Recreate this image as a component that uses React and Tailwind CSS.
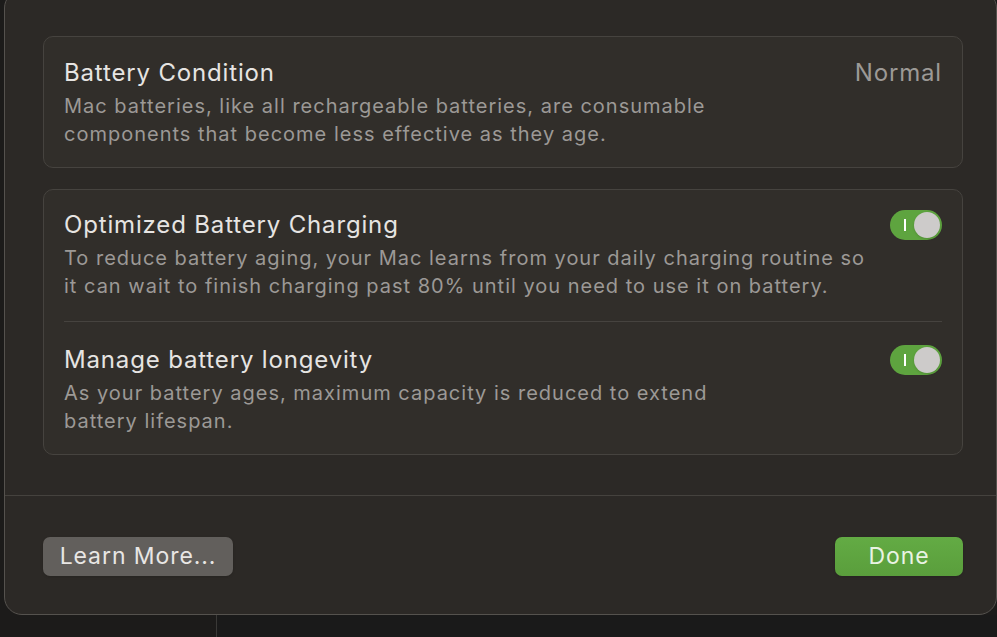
import React from "react";

function Toggle() {
  return (
    <div className="relative h-[30px] w-[52px] shrink-0 rounded-full bg-[#5ea43f]">
      <span className="absolute left-[14px] top-[9px] h-[12px] w-[2px] bg-white" />
      <span className="absolute right-[2px] top-[2px] h-[26px] w-[26px] rounded-full bg-[#cdcbca] shadow" />
    </div>
  );
}

function Row({ title, text, right }) {
  return (
    <div className="flex items-start justify-between">
      <div>
        <div className="text-[24px] leading-[30px] tracking-[0.035em] text-[#e6e4e2]">{title}</div>
        <div className="mt-[4px] text-[20px] leading-[28px] tracking-[0.05em] text-[#9c9996]">{text}</div>
      </div>
      {right}
    </div>
  );
}

export default function App() {
  return (
    <div
      className="flex h-[637px] w-[997px] flex-col overflow-hidden bg-[#1c1b1a]"
      style={{ fontFamily: "Inter, 'Open Sans', sans-serif" }}
    >
      <div className="ml-[4px] mt-[-10px] flex h-[625px] flex-col rounded-[18px] border border-[#55524e] bg-[#2c2926]">
        <div className="pl-[38px] pr-[33px] pt-[45px]">
          {/* Battery condition */}
          <div className="rounded-[10px] border border-[#46433f] bg-[#312e2a] px-[20px] pb-[19px] pt-[21px]">
            <Row
              title="Battery Condition"
              text={
                <>
                  Mac batteries, like all rechargeable batteries, are consumable
                  <br />
                  components that become less effective as they age.
                </>
              }
              right={<div className="text-[24px] leading-[30px] tracking-[0.035em] text-[#9c9996]">Normal</div>}
            />
          </div>

          {/* Charging settings */}
          <div className="mt-[21px] rounded-[10px] border border-[#46433f] bg-[#312e2a] px-[20px] pb-[19px] pt-[20px]">
            <Row
              title="Optimized Battery Charging"
              text={
                <>
                  To reduce battery aging, your Mac learns from your daily charging routine so
                  <br />
                  it can wait to finish charging past 80% until you need to use it on battery.
                </>
              }
              right={<Toggle />}
            />
            <div className="mb-[23px] mt-[21px] h-px bg-[#46433f]" />
            <Row
              title="Manage battery longevity"
              text={
                <>
                  As your battery ages, maximum capacity is reduced to extend
                  <br />
                  battery lifespan.
                </>
              }
              right={<Toggle />}
            />
          </div>
        </div>

        <div className="mt-[40px] h-px bg-[#45423e]" />

        <div className="flex items-center justify-between pl-[38px] pr-[33px] pt-[41px]">
          <button className="h-[39px] w-[190px] rounded-[7px] bg-[#625f5c] text-[23px] tracking-[0.04em] text-[#e8e6e4] shadow">
            Learn More...
          </button>
          <button className="h-[39px] w-[128px] rounded-[7px] bg-gradient-to-b from-[#63ab44] to-[#5a9e3c] text-[23px] tracking-[0.04em] text-[#e9f3e3] shadow">
            Done
          </button>
        </div>
      </div>
      <div className="flex flex-1">
        <div className="w-[217px] border-r border-[#3a3937]" />
        <div className="flex-1 bg-[#1a1a1a]" />
      </div>
    </div>
  );
}
